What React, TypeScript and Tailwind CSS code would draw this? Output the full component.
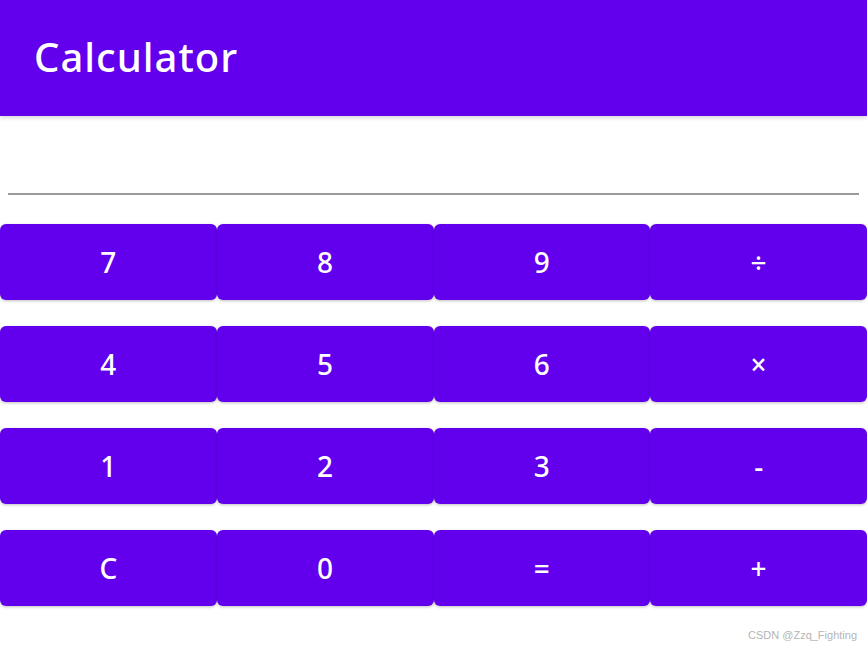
import React from "react";

const rows = [
  ["7", "8", "9", "÷"],
  ["4", "5", "6", "×"],
  ["1", "2", "3", "-"],
  ["C", "0", "=", "+"],
];

export default function App() {
  return (
    <div
      className="w-[867px] h-[663px] bg-white flex flex-col relative overflow-hidden"
      style={{ fontFamily: '"Noto Sans", "Open Sans", sans-serif' }}
    >
      <div className="h-[116px] bg-[#6200ee] flex items-center pl-[34px] shadow-[0_2px_4px_rgba(0,0,0,0.15)]">
        <span className="text-white text-[40px] tracking-[1px] font-medium leading-none -mt-[3px]">Calculator</span>
      </div>
      <div className="h-[77px]" />
      <div className="mx-[8px] h-[2px] bg-[#9a9a9a]" />
      <div className="flex flex-col gap-[26px] mt-[29px]">
        {rows.map((row, i) => (
          <div key={i} className="grid grid-cols-4">
            {row.map((k) => (
              <button
                key={k}
                className="h-[76px] bg-[#6200ee] rounded-[6px] text-white text-[28px] font-medium flex items-center justify-center shadow-[0_1px_3px_rgba(0,0,0,0.25)]"
              >
                {k}
              </button>
            ))}
          </div>
        ))}
      </div>
      <div className="absolute right-[10px] bottom-[20px] text-[11px] text-[#b5b5b5]" style={{ fontFamily: '"Liberation Sans", sans-serif' }}>
        CSDN @Zzq_Fighting
      </div>
    </div>
  );
}
